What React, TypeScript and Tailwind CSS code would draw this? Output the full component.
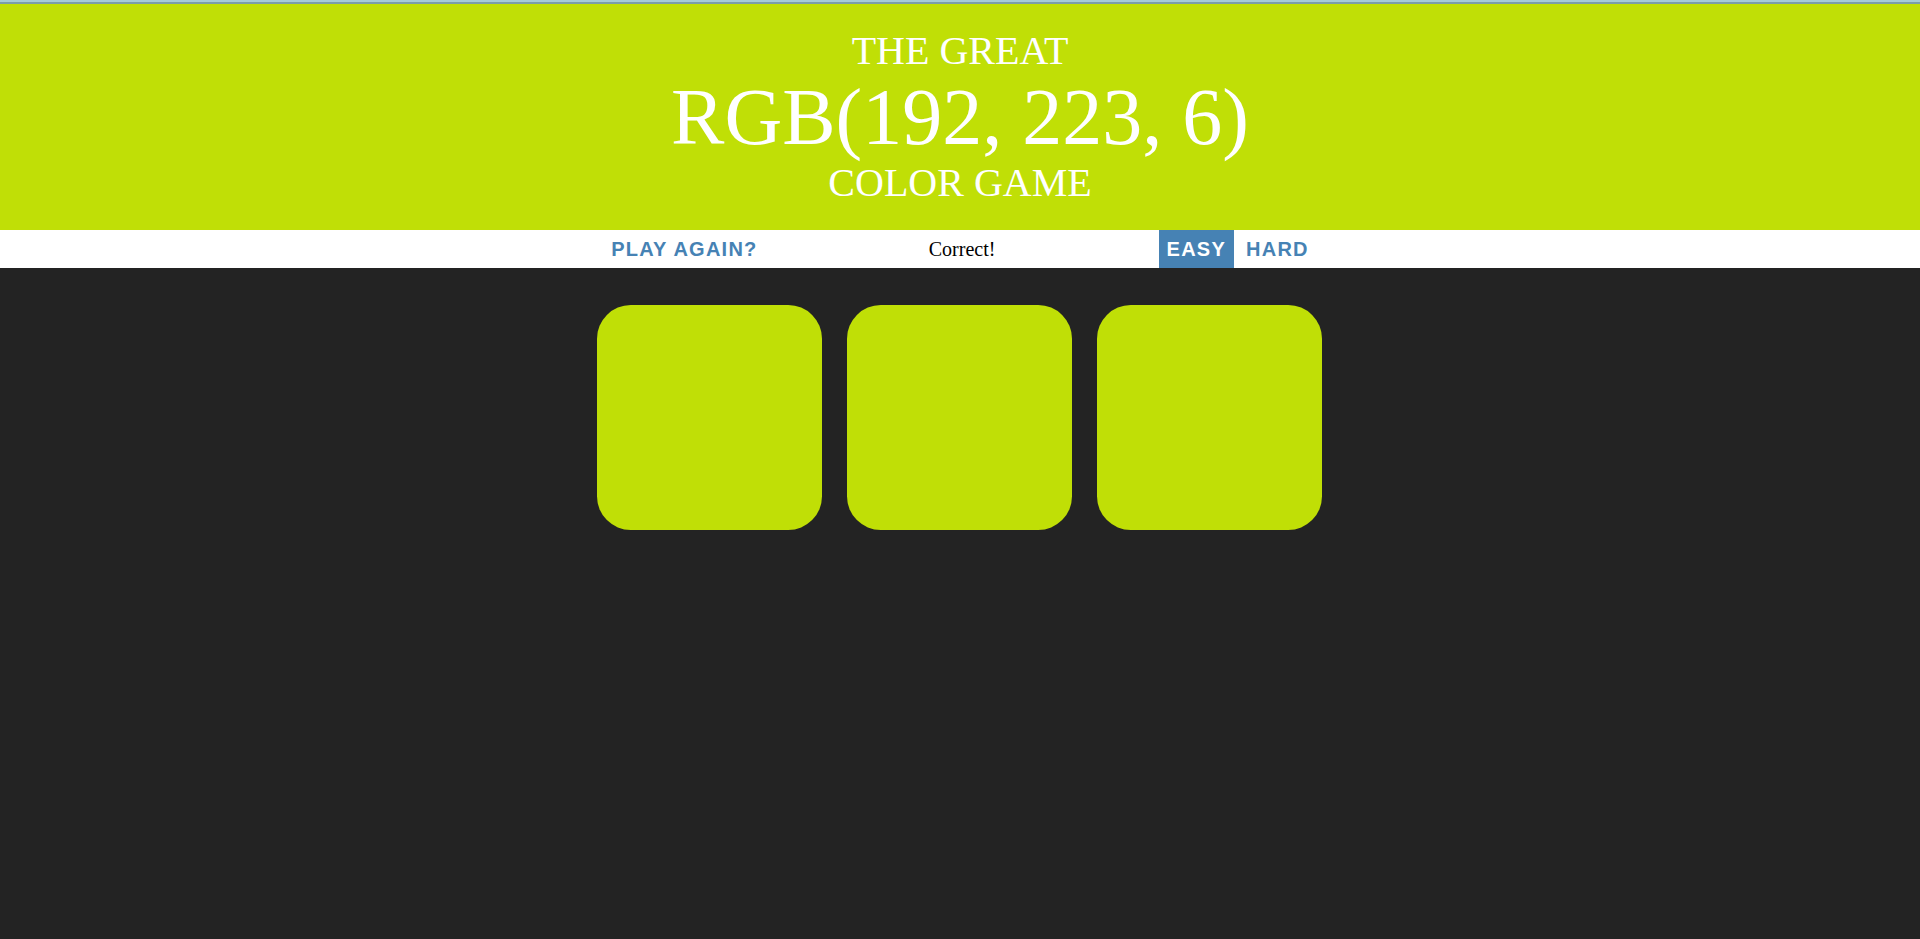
import { useState } from 'react';

const target = 'rgb(192, 223, 6)';

export default function App() {
  const [mode, setMode] = useState<'easy' | 'hard'>('easy');
  const colors = mode === 'easy' ? [target, target, target] : [target, target, target, target, target, target];

  return (
    <div className="min-h-[939px] bg-[#232323]">
      {/* top edge */}
      <div className="h-[2px] bg-[#a6cbd8]" />
      <div className="h-[2px] bg-[#7b9ea9]" />

      <h1
        className="m-0 py-[25px] text-center text-[40px] leading-[1.1] font-normal uppercase text-white"
        style={{ backgroundColor: target, fontFamily: '"Liberation Serif", "Times New Roman", serif' }}
      >
        The Great
        <br />
        <span className="text-[80px]">RGB(192, 223, 6)</span>
        <br />
        Color Game
      </h1>

      <div className="h-[37.5px] bg-white flex justify-center items-stretch gap-[5px] text-[20px]">
        <button className="h-full px-[7.5px] flex items-center font-['Liberation_Sans',Arial,sans-serif] font-bold uppercase tracking-[1.25px] text-[#4682b4]">
          Play Again?
        </button>
        <span className="w-[20%] flex items-center justify-center text-black font-['Liberation_Serif','Times_New_Roman',serif]">
          Correct!
        </span>
        <button
          onClick={() => setMode('easy')}
          className={`h-full px-[7.5px] flex items-center font-['Liberation_Sans',Arial,sans-serif] font-bold uppercase tracking-[1.25px] ${
            mode === 'easy' ? 'bg-[#4682b4] text-white' : 'text-[#4682b4]'
          }`}
        >
          Easy
        </button>
        <button
          onClick={() => setMode('hard')}
          className={`h-full px-[7.5px] flex items-center font-['Liberation_Sans',Arial,sans-serif] font-bold uppercase tracking-[1.25px] ${
            mode === 'hard' ? 'bg-[#4682b4] text-white' : 'text-[#4682b4]'
          }`}
        >
          Hard
        </button>
      </div>

      {/* squares */}
      <div className="max-w-[750px] mx-auto mt-[25px] flex flex-wrap">
        {colors.map((c, i) => (
          <div key={i} className="w-[30%] aspect-square m-[1.66%] rounded-[15%]" style={{ backgroundColor: c }} />
        ))}
      </div>
    </div>
  );
}
